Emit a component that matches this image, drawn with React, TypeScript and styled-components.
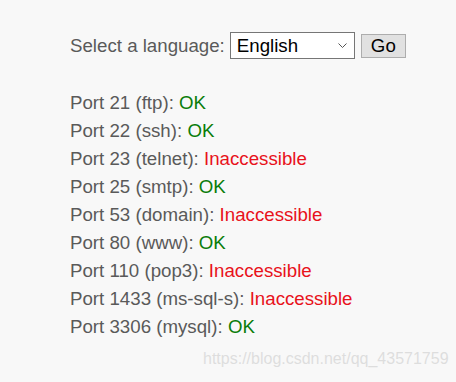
import React from "react";
import styled, { createGlobalStyle } from "styled-components";

const Global = createGlobalStyle`
  html, body { margin: 0; padding: 0; background: #f8f8f8; }
  body { font-family: "Liberation Sans", Arial, sans-serif; }
`;

const Page = styled.div`
  position: relative;
  width: 456px;
  height: 382px;
  box-sizing: border-box;
  padding: 32px 0 0 70px;
  color: #5a5a5a;
  font-size: 18.7px;
`;

const Form = styled.form`
  display: flex;
  align-items: center;
  height: 27px;
  margin: 0;
`;

const Label = styled.span`
  margin-right: 5px;
`;

const SelectWrap = styled.div`
  position: relative;
  width: 125px;
  height: 27px;
  margin-right: 6px;
`;

const Select = styled.select`
  appearance: none;
  -webkit-appearance: none;
  font-family: "Liberation Sans", Arial, sans-serif;
  font-size: 18.7px;
  color: #000;
  width: 100%;
  height: 100%;
  box-sizing: border-box;
  background: #fff;
  border: 1px solid #767676;
  border-radius: 0;
  padding: 0 0 0 6px;
  margin: 0;
`;

const Chevron = styled.svg`
  position: absolute;
  right: 8px;
  top: 11px;
  pointer-events: none;
`;

const Button = styled.button`
  font-family: "Liberation Sans", Arial, sans-serif;
  font-size: 18.7px;
  color: #000;
  background: #e1e1e1;
  border: 1px solid #adadad;
  height: 24px;
  width: 45px;
  padding: 0;
  line-height: 20px;
`;

const List = styled.div`
  margin-top: 30px;
  display: flex;
  flex-direction: column;
`;

const Row = styled.div`
  height: 28px;
  line-height: 28px;
`;

const Status = styled.span<{ $ok: boolean }>`
  color: ${(p) => (p.$ok ? "#0a7d0a" : "#e8121b")};
`;

const Watermark = styled.div`
  position: absolute;
  left: 203px;
  top: 350px;
  font-size: 16px;
  color: rgba(210, 210, 210, 0.7);
`;

const ports: [string, boolean][] = [
  ["Port 21 (ftp)", true],
  ["Port 22 (ssh)", true],
  ["Port 23 (telnet)", false],
  ["Port 25 (smtp)", true],
  ["Port 53 (domain)", false],
  ["Port 80 (www)", true],
  ["Port 110 (pop3)", false],
  ["Port 1433 (ms-sql-s)", false],
  ["Port 3306 (mysql)", true],
];

export default function App() {
  return (
    <>
      <Global />
      <Page>
        <Form onSubmit={(e) => e.preventDefault()}>
          <Label>Select a language:</Label>
          <SelectWrap>
            <Select defaultValue="en">
              <option value="en">English</option>
              <option value="zh">中文</option>
            </Select>
            <Chevron width="9" height="5" viewBox="0 0 9 5">
              <path d="M0.5 0.5 L4.5 4.5 L8.5 0.5" fill="none" stroke="#555" strokeWidth="1" />
            </Chevron>
          </SelectWrap>
          <Button type="submit">Go</Button>
        </Form>
        <List>
          {ports.map(([name, ok]) => (
            <Row key={name}>
              {name}: <Status $ok={ok}>{ok ? "OK" : "Inaccessible"}</Status>
            </Row>
          ))}
        </List>
        <Watermark>https://blog.csdn.net/qq_43571759</Watermark>
      </Page>
    </>
  );
}
